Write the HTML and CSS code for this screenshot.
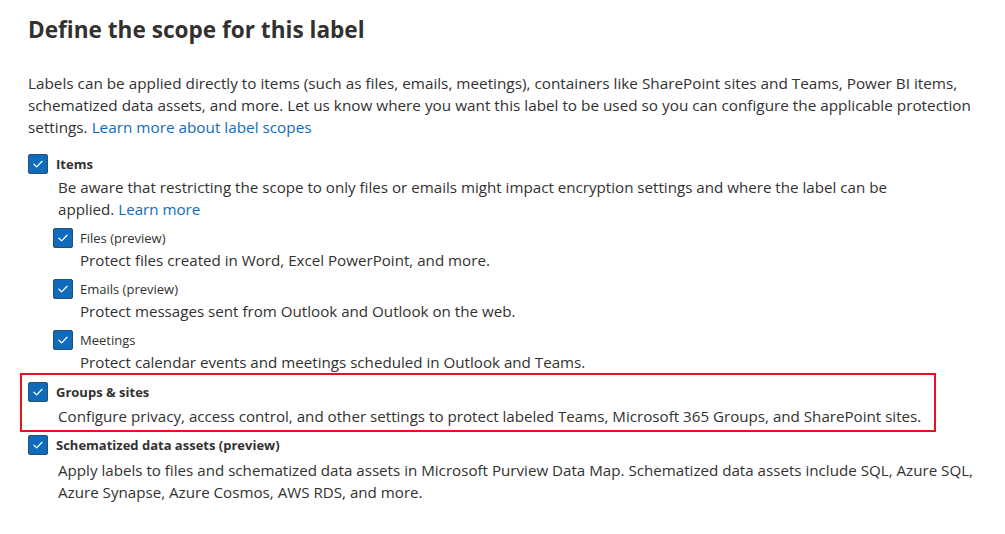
FILE: index.html
```html
<!DOCTYPE html>
<html>
<head>
<meta charset="utf-8">
<link rel="stylesheet" href="styles.css">
</head>
<body>
<main class="page">
  <h1 class="title">Define the scope for this label</h1>
  <p class="intro">Labels can be applied directly to items (such as files, emails, meetings), containers like SharePoint sites and Teams, Power BI items,<br>schematized data assets, and more. Let us know where you want this label to be used so you can configure the applicable protection<br>settings. <a class="link">Learn more about label scopes</a></p>

  <div class="option first">
    <div class="row"><span class="cb"><svg viewBox="0 0 20 20"><path d="M5.5 10.2l3 3L14.5 7"/></svg></span><span class="lbl bold">Items</span></div>
    <div class="desc">Be aware that restricting the scope to only files or emails might impact encryption settings and where the label can be<br>applied. <a class="link">Learn more</a></div>
    <div class="sub">
      <div class="row"><span class="cb"><svg viewBox="0 0 20 20"><path d="M5.5 10.2l3 3L14.5 7"/></svg></span><span class="lbl">Files (preview)</span></div>
      <div class="desc">Protect files created in Word, Excel PowerPoint, and more.</div>
    </div>
    <div class="sub">
      <div class="row"><span class="cb"><svg viewBox="0 0 20 20"><path d="M5.5 10.2l3 3L14.5 7"/></svg></span><span class="lbl">Emails (preview)</span></div>
      <div class="desc">Protect messages sent from Outlook and Outlook on the web.</div>
    </div>
    <div class="sub">
      <div class="row"><span class="cb"><svg viewBox="0 0 20 20"><path d="M5.5 10.2l3 3L14.5 7"/></svg></span><span class="lbl">Meetings</span></div>
      <div class="desc">Protect calendar events and meetings scheduled in Outlook and Teams.</div>
    </div>
  </div>

  <div class="option highlight">
    <div class="row"><span class="cb"><svg viewBox="0 0 20 20"><path d="M5.5 10.2l3 3L14.5 7"/></svg></span><span class="lbl bold">Groups &amp; sites</span></div>
    <div class="desc">Configure privacy, access control, and other settings to protect labeled Teams, Microsoft 365 Groups, and SharePoint sites.</div>
  </div>

  <div class="option last">
    <div class="row"><span class="cb"><svg viewBox="0 0 20 20"><path d="M5.5 10.2l3 3L14.5 7"/></svg></span><span class="lbl bold">Schematized data assets (preview)</span></div>
    <div class="desc">Apply labels to files and schematized data assets in Microsoft Purview Data Map. Schematized data assets include SQL, Azure SQL,<br>Azure Synapse, Azure Cosmos, AWS RDS, and more.</div>
  </div>
</main>
</body>
</html>
```

FILE: styles.css
```css
html, body {
  margin: 0;
  padding: 0;
  background: #ffffff;
}
body {
  font-family: "Open Sans", "Noto Sans", sans-serif;
  color: #323130;
}
.page {
  padding: 14px 0 0 28px;
}
.title {
  margin: 0;
  font-size: 22.6px;
  font-weight: 700;
  line-height: 32px;
  color: #323130;
}
.intro {
  margin: 26px 0 0 0;
  font-size: 15.3px;
  line-height: 22px;
  white-space: nowrap;
}
.link {
  color: #0f6cbd;
  text-decoration: none;
}
.option.first {
  margin-top: 16px;
}
.row {
  display: flex;
  align-items: center;
  height: 20px;
}
.cb {
  width: 20px;
  height: 20px;
  box-sizing: border-box;
  background: #0f6cbd;
  border: 1px solid #2b4d6e;
  border-radius: 2px;
  display: flex;
  flex: none;
}
.cb svg {
  width: 18px;
  height: 18px;
}
.cb path {
  fill: none;
  stroke: #ffffff;
  stroke-width: 1.4;
  stroke-linecap: round;
  stroke-linejoin: round;
}
.lbl {
  margin-left: 8px;
  font-size: 13px;
  line-height: 18px;
}
.bold {
  font-weight: 700;
}
.desc {
  margin-left: 30px;
  margin-top: 2px;
  font-size: 15.15px;
  line-height: 22px;
  white-space: nowrap;
}
.sub {
  margin-left: 25px;
  margin-top: 8px;
}
.sub .desc {
  margin-left: 27px;
  margin-top: 1px;
}
.sub .row .lbl {
  margin-left: 7px;
}
.highlight {
  margin-left: -8px;
  width: 900px;
  padding: 7px 6px 3px 6px;
  border: 2px solid #e81123;
}
.highlight .desc {
  margin-top: 3px;
}
.option.last {
  margin-top: 3px;
}
.option.last .desc {
  margin-top: 4px;
}
```
